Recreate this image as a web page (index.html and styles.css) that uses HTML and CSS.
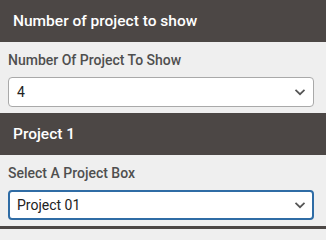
FILE: index.html
```html
<!DOCTYPE html>
<html lang="en">
<head>
<meta charset="utf-8">
<title>Project settings</title>
<link rel="stylesheet" href="styles.css">
</head>
<body>
<div class="panel">
  <div class="head">Number of project to show</div>
  <div class="field">
    <div class="label">Number Of Project To Show</div>
    <div class="select">
      <span class="value">4</span>
      <svg class="chev" width="12" height="8" viewBox="0 0 12 8"><path d="M1.5 1.8 L6 6.2 L10.5 1.8" fill="none" stroke="#555" stroke-width="1.7"/></svg>
    </div>
  </div>
  <div class="head">Project 1</div>
  <div class="field">
    <div class="label">Select A Project Box</div>
    <div class="select active">
      <span class="value">Project 01</span>
      <svg class="chev" width="12" height="8" viewBox="0 0 12 8"><path d="M1.5 1.8 L6 6.2 L10.5 1.8" fill="none" stroke="#555" stroke-width="1.7"/></svg>
    </div>
  </div>
  <div class="foot"></div>
</div>
</body>
</html>
```
FILE: styles.css
```css
html, body {
  margin: 0;
  padding: 0;
  background: #efefef;
}
.panel {
  width: 326px;
  height: 229px;
  overflow: hidden;
  font-family: Roboto, "Liberation Sans", sans-serif;
  background: #efefef;
}
.head {
  height: 42px;
  background: #4c4745;
  color: #ffffff;
  font-size: 15.5px;
  font-weight: 500;
  display: flex;
  align-items: center;
  padding-left: 13px;
}
.field {
  padding: 8px 12px 6px 8px;
}
.label {
  height: 20px;
  line-height: 20px;
  font-size: 14px;
  font-weight: 500;
  color: #4f4f4f;
  margin-bottom: 7px;
}
.select {
  box-sizing: border-box;
  height: 30px;
  background: #ffffff;
  border: 1px solid #a9a9a9;
  border-radius: 4px;
  display: flex;
  align-items: center;
  justify-content: space-between;
  padding: 0 7px 0 8px;
  font-size: 14px;
  color: #222;
}
.select.active {
  border: 2px solid #2f6ca5;
  padding-left: 7px;
  padding-right: 6px;
}
.chev {
  display: block;
}
.foot {
  height: 10px;
  background: #4c4745;
}
```
